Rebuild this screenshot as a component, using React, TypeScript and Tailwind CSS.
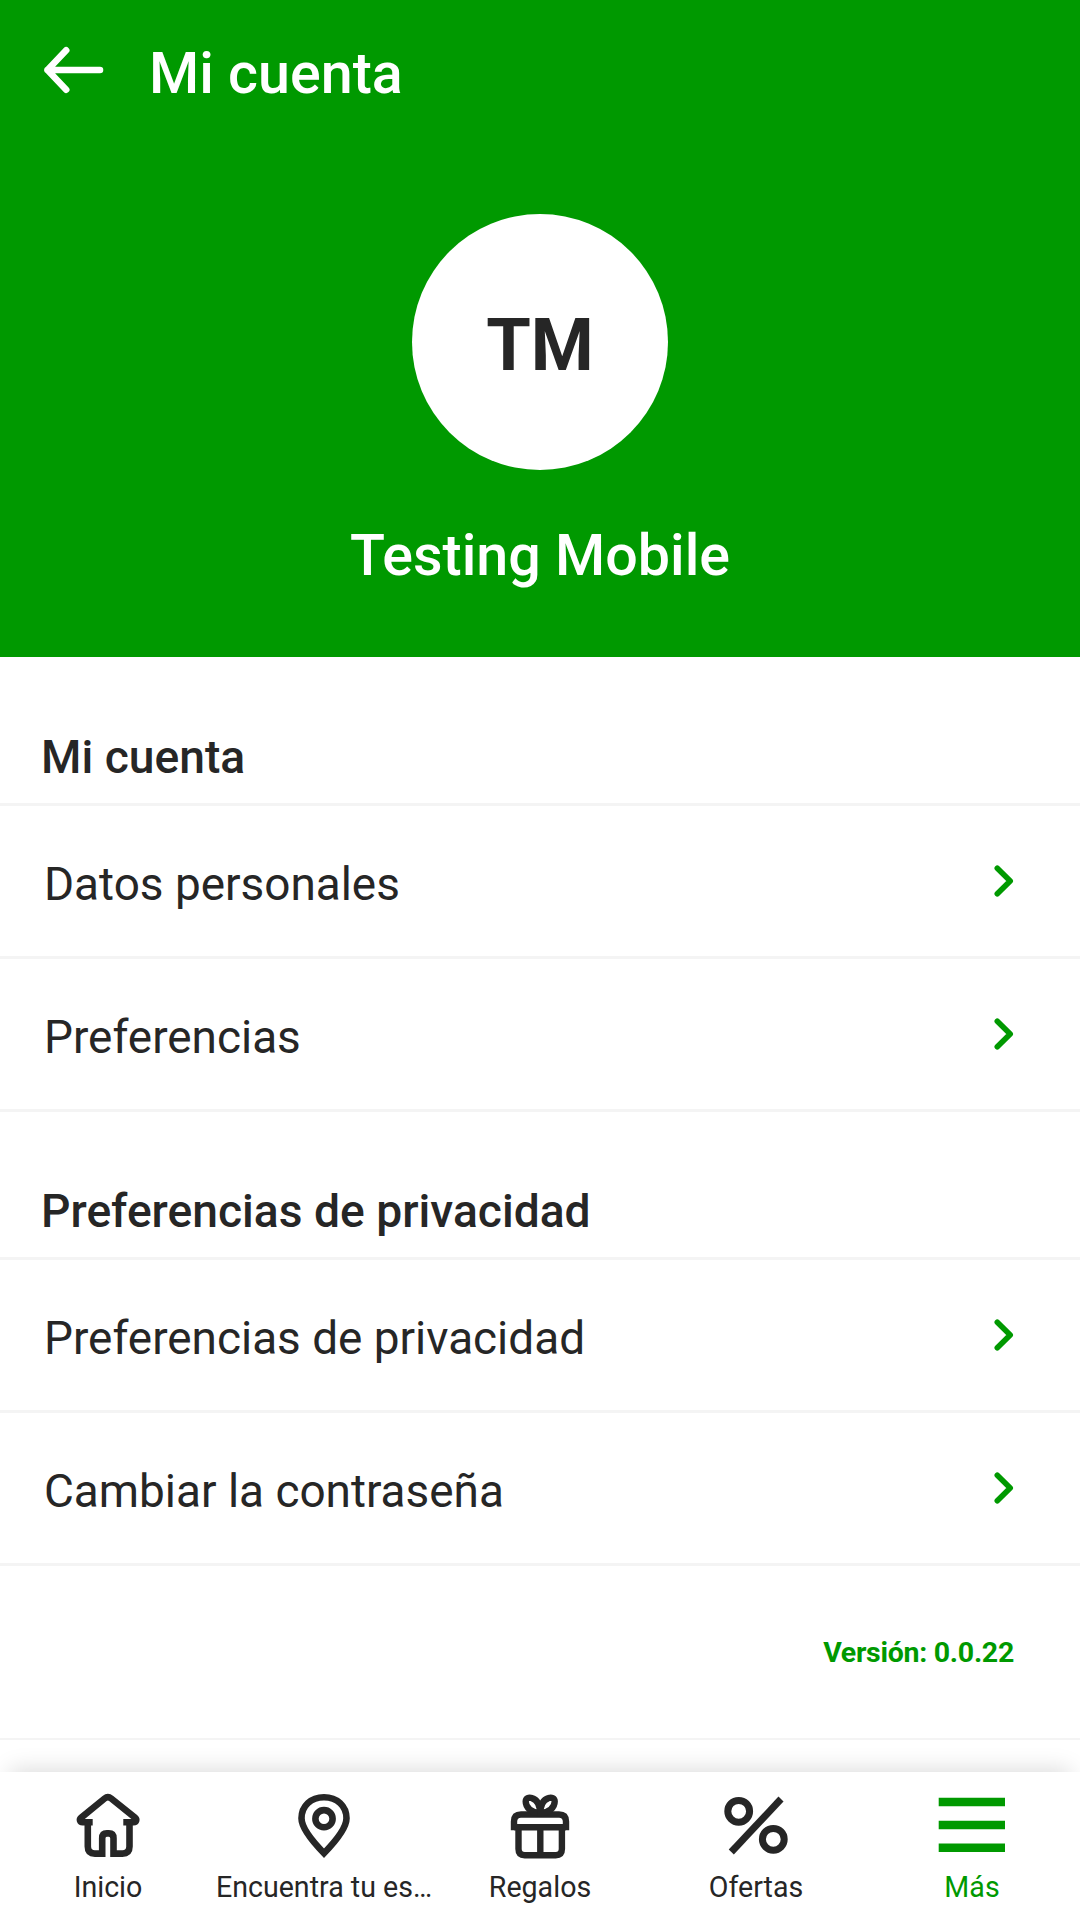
import type { ReactNode } from 'react';

// ── Icons ─────────────────────────────────────────────────────────────────────

function BackIcon() {
  return (
    <svg className="h-[52px] w-[66px]" viewBox="0 0 66 52" fill="none" stroke="currentColor" strokeWidth="6.6" strokeLinecap="round" strokeLinejoin="round">
      <path d="M60 26H7.5M26.2 6.3L7.5 26l18.7 19.7" />
    </svg>
  );
}

function ChevronIcon() {
  return (
    <svg className="h-9 w-6" viewBox="0 0 24 36" fill="none" stroke="currentColor" strokeWidth="5.6" strokeLinecap="round" strokeLinejoin="round">
      <path d="M5.3 5.3L18.2 18 5.3 30.7" />
    </svg>
  );
}

function HomeIcon() {
  return (
    <svg className="size-[72px]" viewBox="0 0 72 72" fill="none" stroke="currentColor" strokeWidth="6.6">
      <path d="M20.7 32.2H10.6C7.8 32.2 7 29.4 9.2 27.6L32.6 8.5q3.3-2.7 6.6 0L63 27.6c2.2 1.8 1.4 4.6-1.4 4.6H51.3" />
      <path d="M15.8 32v24.5q0 7.1 7.1 7.1h7.3V48.2q0-4.8 4.6-4.8h2.1q4.6 0 4.6 4.8v15.4h8.9q7.1 0 7.1-7.1V32" />
    </svg>
  );
}

function PinIcon() {
  return (
    <svg className="size-[72px]" viewBox="0 0 72 72" fill="none" stroke="currentColor" strokeWidth="6.6">
      <path d="M36 63.2C27.5 54.5 13.5 39.5 13.5 28.3 13.5 15.8 23 7.2 36 7.2s22.5 8.6 22.5 21.1C58.5 39.5 44.5 54.5 36 63.2z" />
      <circle cx="36" cy="28.7" r="8.6" />
    </svg>
  );
}

function GiftIcon() {
  return (
    <svg className="size-[72px]" viewBox="0 0 72 72" fill="none" stroke="currentColor" strokeWidth="6.4">
      <path d="M10 40.3V31.5q0-7 7-7h38q7 0 7 7v8.8M10 37.3h52" />
      <path d="M14.5 39v20q0 6.2 6.2 6.2h31q6.2 0 6.2-6.2V39M36.3 38v27" />
      <path d="M36 23C27.5 23 21.7 17.5 21.7 11.5c0-3.3 3.2-4.5 6.2-3.4C33 9.7 36 15 36 23z" />
      <path d="M36.4 23c8.5 0 14.3-5.5 14.3-11.5 0-3.3-3.2-4.5-6.2-3.4C39.4 9.7 36.4 15 36.4 23z" />
    </svg>
  );
}

function PercentIcon() {
  return (
    <svg className="size-[72px]" viewBox="0 0 72 72" fill="none" stroke="currentColor" strokeWidth="7">
      <circle cx="18.7" cy="21.3" r="10.9" />
      <circle cx="53.3" cy="49.3" r="10.9" />
      <path d="M61 9L11.3 62" />
    </svg>
  );
}

function MenuIcon() {
  return (
    <svg className="size-[72px]" viewBox="0 0 72 72" fill="none" stroke="currentColor" strokeWidth="8.6">
      <path d="M2.7 12H69M2.7 35H69M2.7 57.7H69" />
    </svg>
  );
}

// ── Menu sections ─────────────────────────────────────────────────────────────

const sections = [
  { title: 'Mi cuenta', items: ['Datos personales', 'Preferencias'] },
  { title: 'Preferencias de privacidad', items: ['Preferencias de privacidad', 'Cambiar la contraseña'] },
];

function MenuRow({ label }: { label: string }) {
  return (
    <button className="flex h-[153px] w-full items-center justify-between border-b-3 border-[#f4f4f4] pr-16 pl-11 text-left">
      <span className="pt-1.5 text-[45.9px] leading-[54px]">{label}</span>
      <span className="text-[#009900]"><ChevronIcon /></span>
    </button>
  );
}

function MenuSection({ title, items }: { title: string; items: string[] }) {
  return (
    <section>
      <h2 className="flex h-[148px] items-end border-b-3 border-[#f4f4f4] pb-[19px] pl-[41px] text-[46.2px] leading-[54px] font-medium">
        {title}
      </h2>
      {items.map((item) => <MenuRow key={item} label={item} />)}
    </section>
  );
}

// ── Bottom navigation ─────────────────────────────────────────────────────────

const tabs: { label: string; icon: ReactNode; active?: boolean }[] = [
  { label: 'Inicio', icon: <HomeIcon /> },
  { label: 'Encuentra tu es…', icon: <PinIcon /> },
  { label: 'Regalos', icon: <GiftIcon /> },
  { label: 'Ofertas', icon: <PercentIcon /> },
  { label: 'Más', icon: <MenuIcon />, active: true },
];

function BottomNav() {
  return (
    <nav className="relative grid h-[148px] shrink-0 grid-cols-5 bg-white shadow-[0_-12px_22px_-10px_rgba(0,0,0,0.15)]">
      {tabs.map((tab) => (
        <button key={tab.label} className={`flex flex-col items-center pt-[18px] ${tab.active ? 'text-[#009900]' : 'text-[#262626]'}`}>
          {tab.icon}
          <span className="mt-2 text-[28.6px] leading-[34px] whitespace-nowrap">{tab.label}</span>
        </button>
      ))}
    </nav>
  );
}

// ── Main page ─────────────────────────────────────────────────────────────────

export default function App() {
  return (
    <div className="flex h-[1920px] w-[1080px] flex-col overflow-hidden bg-white font-[Roboto,sans-serif] text-[#262626]">
      <header className="h-[657px] shrink-0 bg-[#009900] text-white">
        <div className="flex h-[144px] items-center pl-10">
          <button aria-label="Volver" className="-mt-1"><BackIcon /></button>
          <h1 className="ml-[43px] pt-1 text-[57.4px] leading-[68px] font-medium">Mi cuenta</h1>
        </div>
        <div className="flex flex-col items-center pt-[70px]">
          <div className="flex size-64 items-center justify-center rounded-full bg-white pt-2 text-[72px] leading-[84px] font-bold text-[#262626]">
            TM
          </div>
          <p className="mt-[52px] text-[57.4px] leading-[68px] font-medium">Testing Mobile</p>
        </div>
      </header>

      <main className="flex-1 pt-px">
        {sections.map((s) => <MenuSection key={s.title} title={s.title} items={s.items} />)}
        <div className="flex h-[174px] items-center justify-end border-b-2 border-[#f4f4f4] pr-[66px]">
          <span className="pt-0.5 text-[28.5px] leading-8 font-bold tracking-[-0.01em] text-[#009900]">Versión: 0.0.22</span>
        </div>
      </main>

      <BottomNav />
    </div>
  );
}
